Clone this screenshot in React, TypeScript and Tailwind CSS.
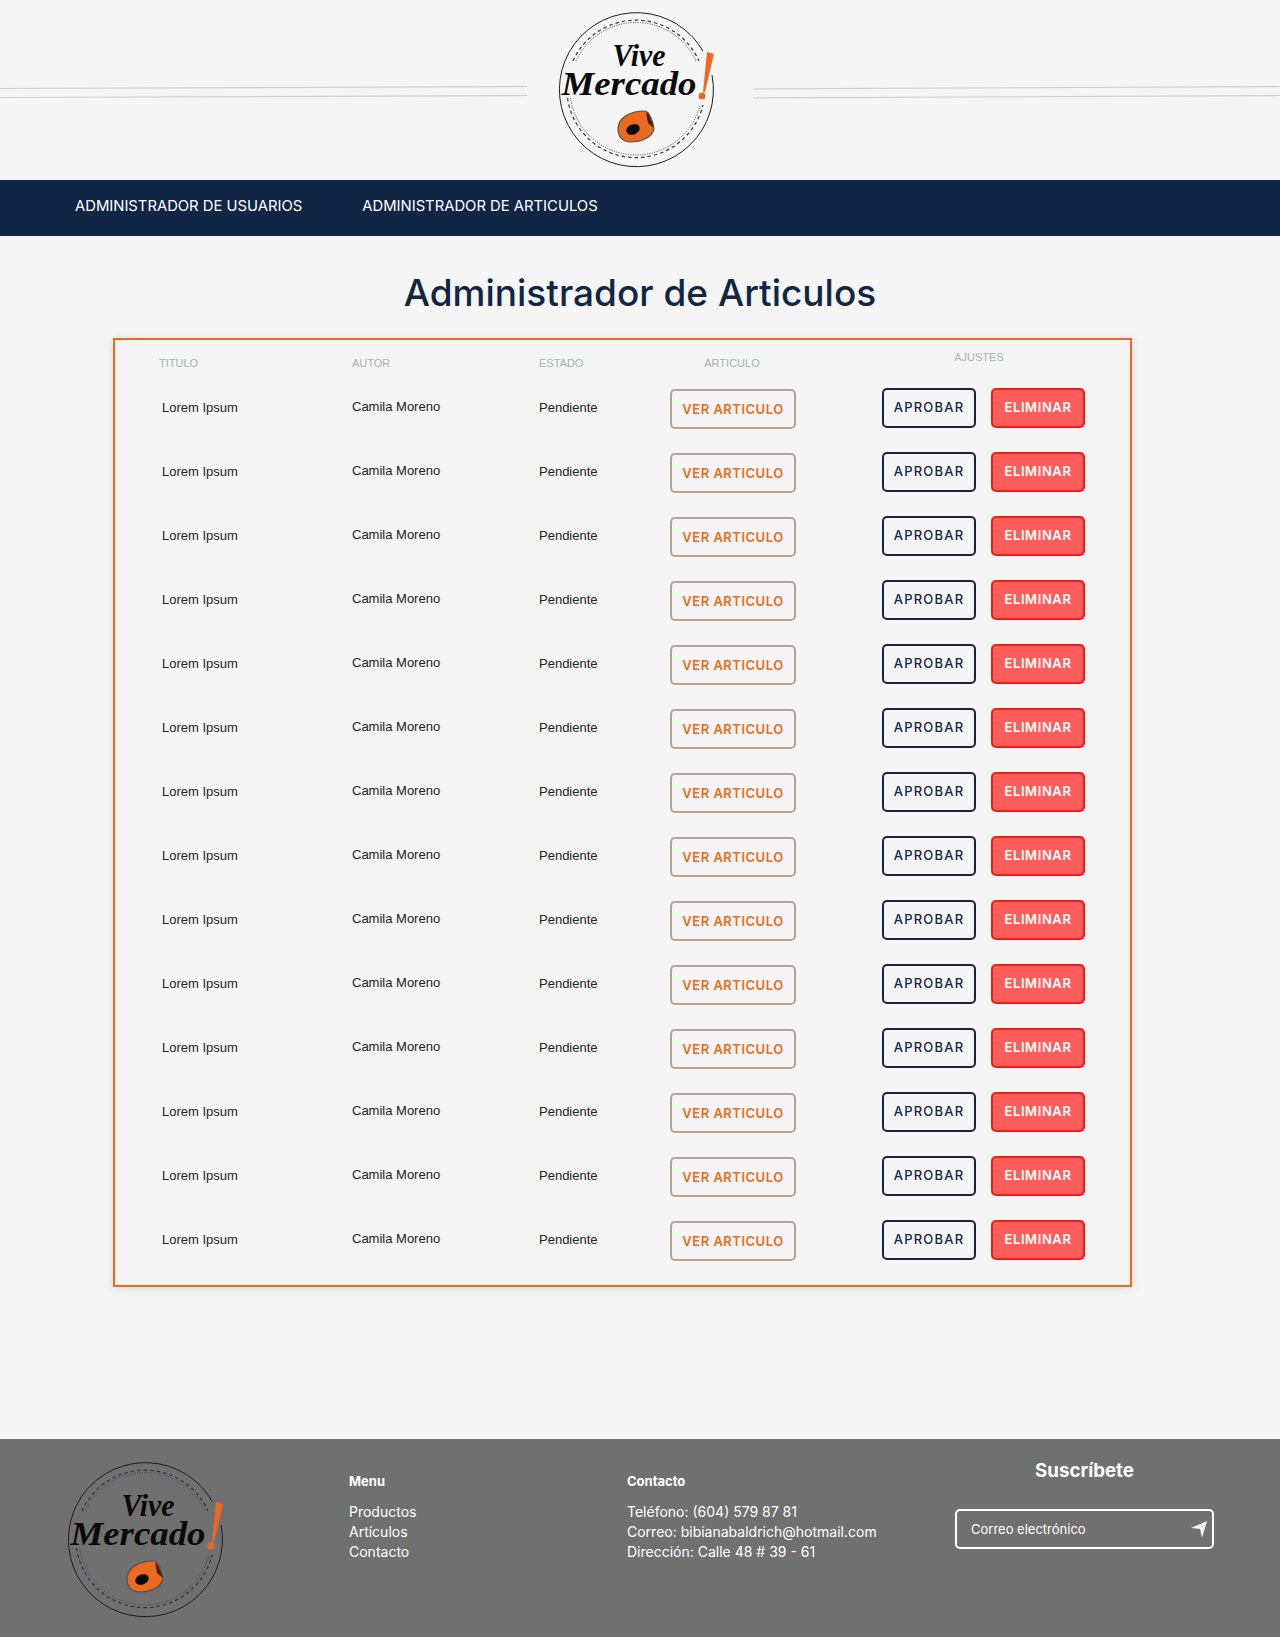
const rows = Array.from({ length: 14 })

function Logo() {
  return (
    <svg width="160" height="160" viewBox="0 0 160 160" fill="none">
      <path d="M147 42 A77 77 0 1 0 156 66" stroke="#1c1c1c" strokeWidth="1" />
      <path d="M17 52 A69 69 0 0 1 143 52" stroke="#333333" strokeWidth="1.2" strokeDasharray="3.5 3" />
      <path d="M20 52 A66 66 0 0 1 140 52" stroke="#3b4a63" strokeWidth="0.9" strokeDasharray="1.2 1.2" />
      <path d="M11.6 89 A69 69 0 0 0 147 96" stroke="#333333" strokeWidth="1.2" strokeDasharray="3.5 3" />
      <path d="M14.6 89 A66 66 0 0 0 144 96" stroke="#3b4a63" strokeWidth="0.9" strokeDasharray="1.2 1.2" />
      <text
        x="83"
        y="57"
        textAnchor="middle"
        textLength="53"
        lengthAdjust="spacingAndGlyphs"
        fill="#0a0a0a"
        className="font-['Liberation_Serif',serif] text-[31px] font-bold italic"
      >
        Vive
      </text>
      <text
        x="73"
        y="86"
        textAnchor="middle"
        textLength="135"
        lengthAdjust="spacingAndGlyphs"
        fill="#0a0a0a"
        className="font-['Liberation_Serif',serif] text-[34px] font-bold italic"
      >
        Mercado
      </text>
      <path d="M151 43 L158 45 L149 83 L147 83 Z" fill="#ec6a1f" />
      <circle cx="146" cy="87" r="3.5" fill="#ec6a1f" />
      <path d="M62 120 C62 110 72 102 89 102 C93 102 97 112 98 120 C96 128 86 133 75 133 C66 133 62 127 62 120 Z" fill="#ec6a1f" stroke="#55504a" strokeWidth="1.2" />
      <path d="M90 103 C93 105 96 112 97.5 119 L92 114 Z" fill="#3a2412" />
      <ellipse cx="77" cy="120.5" rx="7" ry="5" transform="rotate(-22 77 120.5)" fill="#0a0a0a" />
    </svg>
  )
}

function HeaderLines({ width, left }: { width: number; left: boolean }) {
  const top = left ? 2.5 : 3
  return (
    <svg width={width} height="14" viewBox={`0 0 ${width} 14`} className="mt-[5px] shrink-0">
      <line x1="0" y1={top} x2={width} y2="0.5" stroke="#cfcfcf" strokeWidth="1.2" />
      <line x1="0" y1={top + 9} x2={width} y2="9.5" stroke="#cfcfcf" strokeWidth="1.2" />
    </svg>
  )
}

function Row() {
  return (
    <div className="grid h-[64px] grid-cols-[193px_187px_131px_212px_auto] items-center font-['Liberation_Sans',sans-serif] text-[13px] text-[#222222]">
      <div className="pl-[3px]">Lorem Ipsum</div>
      <div className="-mt-[2px]">Camila Moreno</div>
      <div>Pendiente</div>
      <div className="mt-[2px]">
        <button className="h-[40px] w-[126px] rounded-[5px] border-2 border-[#b5a491] pt-[1px] font-['Inter',sans-serif] text-[13px] font-semibold tracking-[0.5px] text-[#ec6a1f]">
          VER ARTICULO
        </button>
      </div>
      <div className="flex gap-[15px]">
        <button className="h-[40px] w-[94px] rounded-[5px] border-2 border-[#112645] font-['Inter',sans-serif] text-[13px] font-medium tracking-[1.2px] text-[#112645]">
          APROBAR
        </button>
        <button className="h-[40px] w-[94px] rounded-[5px] border-2 border-[#ee1c1c] bg-[#ff5c5c] font-['Inter',sans-serif] text-[13px] font-semibold tracking-[0.6px] text-white">
          ELIMINAR
        </button>
      </div>
    </div>
  )
}

export default function App() {
  return (
    <div className="h-[1637px] overflow-hidden bg-[#f5f5f5] font-['Inter',sans-serif]">
      {/* Header */}
      <header className="flex h-[180px] items-center">
        <HeaderLines width={527} left />
        <div className="-mt-[2px] w-[226px] pl-[29px]">
          <Logo />
        </div>
        <HeaderLines width={527} left={false} />
      </header>

      {/* Nav */}
      <nav className="flex h-[56px] items-center gap-[60px] bg-[#112645] pb-[4px] pl-[75px] text-[14.8px] text-white">
        <a>ADMINISTRADOR DE USUARIOS</a>
        <a>ADMINISTRADOR DE ARTICULOS</a>
      </nav>

      <main>
        <h1 className="pt-[35px] text-center text-[37px] leading-[44px] font-medium text-[#112645]">
          Administrador de Articulos
        </h1>

        {/* Articles */}
        <div className="mt-[23px] ml-[113px] w-[1019px] border-2 border-[#ec6a1f] pb-[13px] pl-[44px] shadow-[0_2px_10px_rgba(0,0,0,0.1)]">
          <div className="grid h-[36px] grid-cols-[193px_187px_131px_212px_auto] font-['Liberation_Sans',sans-serif] text-[11px] text-[#a9aeb6]">
            <div className="pt-[15px]">TITULO</div>
            <div className="pt-[15px]">AUTOR</div>
            <div className="pt-[15px]">ESTADO</div>
            <div className="w-[124px] pt-[15px] text-center">ARTICULO</div>
            <div className="w-[194px] pt-[9px] text-center">AJUSTES</div>
          </div>
          {rows.map((_, i) => (
            <Row key={i} />
          ))}
        </div>
      </main>

      {/* Footer */}
      <footer className="mt-[152px] flex h-[198px] bg-[#707070] text-white">
        <div className="w-[349px] pt-[20px] pl-[65px]">
          <Logo />
        </div>
        <div className="w-[278px] pt-[34px]">
          <h4 className="text-[13px] leading-[16px] font-bold">Menu</h4>
          <ul className="mt-[13px] text-[14px] leading-[20px]">
            <li>Productos</li>
            <li>Artículos</li>
            <li>Contacto</li>
          </ul>
        </div>
        <div className="w-[328px] pt-[34px]">
          <h4 className="text-[13px] leading-[16px] font-bold">Contacto</h4>
          <ul className="mt-[13px] text-[14px] leading-[20px]">
            <li>Teléfono: (604) 579 87 81</li>
            <li>Correo: bibianabaldrich@hotmail.com</li>
            <li>Dirección: Calle 48 # 39 - 61</li>
          </ul>
        </div>
        <div className="w-[259px] pt-[20px]">
          <h3 className="text-center text-[18.7px] leading-[24px] font-bold">Suscríbete</h3>
          <div className="mt-[26px] flex h-[40px] items-center justify-between rounded-[5px] border-2 border-white pr-[3px] pl-[14px] text-[13px]">
            <span className="pt-[2px]">Correo electrónico</span>
            <svg width="20" height="20" viewBox="0 0 20 20" fill="#f5f5f5">
              <path d="M18 2 L2 9 L11 10 L13 19 Z" />
            </svg>
          </div>
        </div>
      </footer>
    </div>
  )
}
